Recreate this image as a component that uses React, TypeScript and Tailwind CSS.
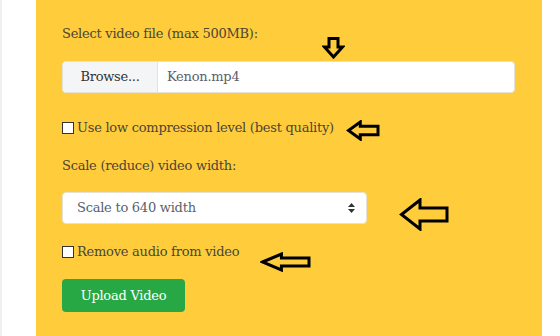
function ArrowDown() {
  return (
    <svg width="23" height="23" viewBox="0 0 23 23" className="absolute left-[322px] top-[36px]">
      <path d="M7 2.5 H16 V11 H20.5 L11.5 21 L2.5 11 H7 Z" fill="none" stroke="#000" strokeWidth="3" />
    </svg>
  );
}

function ArrowLeft({ className, w, h }: { className: string; w: number; h: number }) {
  const shaftTop = h * 0.3;
  const shaftBot = h * 0.7;
  const headX = w * 0.42;
  return (
    <svg width={w} height={h} viewBox={`0 0 ${w} ${h}`} className={className}>
      <path
        d={`M2.5 ${h / 2} L${headX} 2 V${shaftTop} H${w - 2} V${shaftBot} H${headX} V${h - 2} Z`}
        fill="none"
        stroke="#000"
        strokeWidth="3"
      />
    </svg>
  );
}

function SortCaret() {
  return (
    <svg width="7" height="10" viewBox="0 0 7 10" className="text-[#333]">
      <path d="M3.5 0 L7 4 H0 Z M3.5 10 L7 6 H0 Z" fill="currentColor" />
    </svg>
  );
}

export default function App() {
  return (
    <div className="relative flex h-[336px] w-[560px] overflow-hidden bg-white font-['DejaVu_Serif',serif] text-[13px] tracking-[-0.25px] text-[#4a4536]">
      <div className="w-[36px] border-l-2 border-[#eef0f0] bg-white" />
      <div className="w-[506px] bg-[#ffcd3c] px-[26px] pt-[25px]">
        <div className="leading-[18px]">Select video file (max 500MB):</div>

        <div className="mt-[18px] flex h-[32px] w-[453px] overflow-hidden rounded-[4px] border border-[#e6e2d6] bg-white">
          <div className="flex w-[95px] items-center justify-center border-r border-[#e2e2e2] bg-[#f4f5f6] text-[#333]">
            Browse...
          </div>
          <div className="flex items-center pl-[9px] text-[#5a5f6a]">Kenon.mp4</div>
        </div>

        <label className="mt-[28px] flex h-[14px] items-center gap-[3px]">
          <span className="h-[12px] w-[12px] border border-[#333] bg-white" />
          <span>Use low compression level (best quality)</span>
        </label>

        <div className="mt-[22px] leading-[18px]">Scale (reduce) video width:</div>

        <div className="mt-[17px] flex h-[32px] w-[305px] items-center justify-between rounded-[4px] border border-[#e6e2d6] bg-white pl-[14px] pr-[11px] text-[#5a5f6a]">
          <span>Scale to 640 width</span>
          <SortCaret />
        </div>

        <label className="mt-[21px] flex h-[14px] items-center gap-[3px]">
          <span className="h-[12px] w-[12px] border border-[#333] bg-white" />
          <span>Remove audio from video</span>
        </label>

        <button className="mt-[20px] flex h-[33px] w-[123px] items-center justify-center rounded-[4px] bg-[#28a745] text-white">
          Upload Video
        </button>
      </div>
      <div className="flex-1 bg-white" />

      <ArrowDown />
      <ArrowLeft className="absolute left-[346px] top-[120px]" w={34} h={21} />
      <ArrowLeft className="absolute left-[399px] top-[198px]" w={50} h={33} />
      <ArrowLeft className="absolute left-[260px] top-[252px]" w={51} h={20} />
    </div>
  );
}
